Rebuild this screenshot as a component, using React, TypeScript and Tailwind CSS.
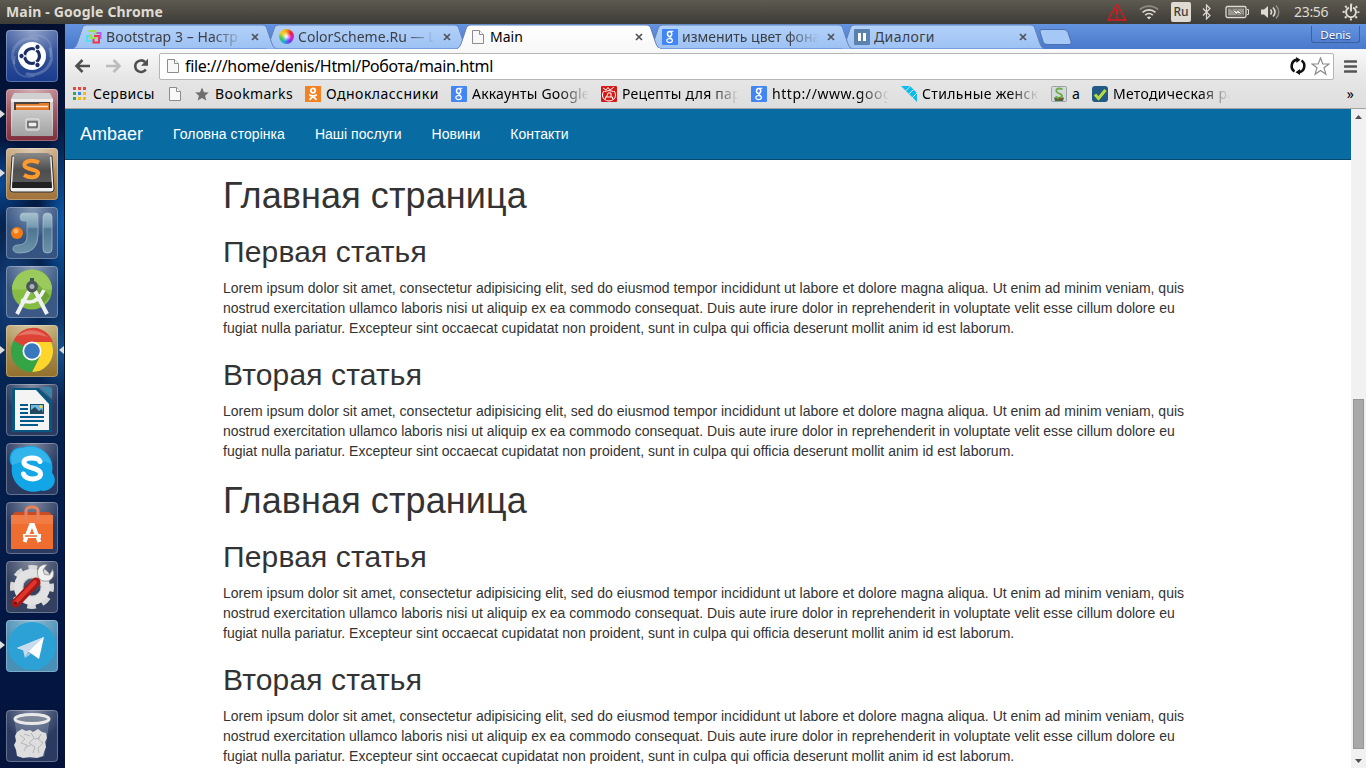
import React from "react";

const LOREM =
  "Lorem ipsum dolor sit amet, consectetur adipisicing elit, sed do eiusmod tempor incididunt ut labore et dolore magna aliqua. Ut enim ad minim veniam, quis nostrud exercitation ullamco laboris nisi ut aliquip ex ea commodo consequat. Duis aute irure dolor in reprehenderit in voluptate velit esse cillum dolore eu fugiat nulla pariatur. Excepteur sint occaecat cupidatat non proident, sunt in culpa qui officia deserunt mollit anim id est laborum.";

const FADE = "[mask-image:linear-gradient(to_right,#000_calc(100%-30px),transparent)]";

/* ---------- small icons ---------- */

function PageIcon() {
  return (
    <svg width="16" height="16" viewBox="0 0 16 16" className="shrink-0">
      <path d="M2.500 1.500h7l4 4v9h-11z" fill="#f8f8f8" stroke="#8c8c8c" />
      <path d="M9.500 1.500v4h4" fill="#fff" stroke="#8c8c8c" />
    </svg>
  );
}

function GoogleIcon() {
  return (
    <svg width="16" height="16" viewBox="0 0 16 16" className="shrink-0">
      <rect width="16" height="16" rx="1" fill="#4285f4" />
      <g fill="none" stroke="#fff">
        <ellipse cx="7.600" cy="5" rx="2.100" ry="2.400" strokeWidth="1.500" />
        <path d="M8.200 2.200h3.300M8.600 7.300c-2 1 .2 1.600 1.400 2.500" strokeWidth="1.100" />
        <ellipse cx="7.600" cy="11.600" rx="2.800" ry="2" strokeWidth="1.200" />
      </g>
    </svg>
  );
}

function BootstrapIcon() {
  return (
    <svg width="16" height="16" viewBox="0 0 16 16" fill="none" strokeWidth="2" className="shrink-0">
      <path d="M5 7H1v5h5" stroke="#4fe0ee" />
      <path d="M9 4h5.500v5H12" stroke="#b55be8" />
      <path d="M2.500 2h7v7h-5V5" stroke="#9be24a" />
      <path d="M8 7h5v6.500H7.500V10" stroke="#f2354b" />
    </svg>
  );
}

function ColorWheel() {
  return (
    <div className="flex size-4 shrink-0 items-center justify-center">
      <div className="size-[15px] rounded-full bg-[radial-gradient(circle,#fff_0%,transparent_45%),conic-gradient(#f4a11c,#ee1c38,#d81fd4,#6a3ef0,#17b4d8,#53c644,#f4d11c,#f4a11c)]" />
    </div>
  );
}

function PauseIcon() {
  return (
    <svg width="16" height="16" viewBox="0 0 16 16" className="shrink-0">
      <rect width="16" height="16" rx="1" fill="#5b82ad" />
      <path d="M4 4h3v8H4zM9 4h3v8H9z" fill="#fff" />
    </svg>
  );
}

function AppsIcon() {
  const colors = ["#e8453c", "#e8453c", "#e8453c", "#2da94f", "#3d82f0", "#f6b912", "#2da94f", "#f6b912", "#f6b912"];
  return (
    <svg width="14" height="14" viewBox="0 0 14 14" className="shrink-0">
      {colors.map((c, i) => (
        <rect key={i} x={(i % 3) * 5} y={Math.floor(i / 3) * 5} width="3" height="3" fill={c} />
      ))}
    </svg>
  );
}

function OkIcon() {
  return (
    <svg width="16" height="16" viewBox="0 0 16 16" className="shrink-0">
      <rect width="16" height="16" fill="#f58220" />
      <g fill="none" stroke="#fff" strokeWidth="1.800" strokeLinecap="round">
        <circle cx="8" cy="4.600" r="2.200" />
        <path d="M4.800 8.900c2 1.400 4.400 1.400 6.400 0M8 10.200L5 13.400M8 10.200l3 3.200" />
      </g>
    </svg>
  );
}

function RecipeIcon() {
  return (
    <svg width="16" height="16" viewBox="0 0 16 16" className="shrink-0">
      <rect width="16" height="16" rx="1" fill="#d31a17" />
      <g fill="none" stroke="#fff" strokeWidth="1">
        <path d="M3 5a6 6 0 0 0 0 8q5 4 10 0a6 6 0 0 0 0-8M3.500 5.500q4.500-2 9 0" />
        <path d="M4.500 13v-2h7v2M5.500 11l1.500-4h3v4M2 2l3 2 2-2.500 2 2.500 4-3" />
      </g>
    </svg>
  );
}

function WingIcon() {
  return (
    <svg width="16" height="16" viewBox="0 0 16 16" className="shrink-0">
      <path d="M0 0h9l7 7v9z" fill="#0bbcec" />
      <path d="M9.500 0L4.500 5M12.500 3.500L8 8M16 7l-5 5" stroke="#e2e2e2" strokeWidth="1" />
    </svg>
  );
}

function SIcon() {
  return (
    <svg width="16" height="16" viewBox="0 0 16 16" className="shrink-0">
      <rect x=".5" y=".5" width="15" height="15" rx="1" fill="#d3d9dd" stroke="#9ba3a8" />
      <path d="M3 11.500h10l-1 3.500H4z" fill="#4a6b3c" />
      <path d="M11.500 3.500C8 1.500 4.500 3 5.500 5.500S11.500 7.500 11 10 6.500 12.500 4.500 10.500" fill="none" stroke="#6fae4c" strokeWidth="2" />
      <path d="M8 12l3 1.500" stroke="#b23a2c" strokeWidth="1.500" />
    </svg>
  );
}

function CheckIcon() {
  return (
    <svg width="16" height="16" viewBox="0 0 16 16" className="shrink-0">
      <rect width="16" height="16" rx="3" fill="#225a85" />
      <path d="M3 8.500l3.500 4L13.500 4" fill="none" stroke="#b6dc3c" strokeWidth="3" />
    </svg>
  );
}

/* ---------- system panel ---------- */

function TopPanel() {
  return (
    <div className="flex h-6 shrink-0 items-center bg-gradient-to-b from-[#5d5a50] to-[#3d3c37] pl-1.5 text-[#dfdbd2]">
      <span className="text-[14px] leading-6 font-bold tracking-[0.150px] whitespace-nowrap">Main - Google Chrome</span>
      <svg className="ml-auto" width="20" height="18" viewBox="0 0 20 18" fill="none" stroke="#e8141b">
        <path d="M10 1.500L19 17H1z" strokeWidth="1.300" />
        <path d="M10 6v6M10 13.500v2" strokeWidth="2" />
      </svg>
      <svg className="ml-3" width="20" height="16" viewBox="0 0 20 16" fill="none" stroke="#dfdbd2" strokeWidth="1.700">
        <path d="M1 5.500c5-4.600 13-4.600 18 0" stroke="#8f8c84" />
        <path d="M3.600 8.300c3.600-3.300 9.200-3.300 12.800 0M6.200 11.100c2.200-2 5.400-2 7.600 0" />
        <path d="M7.800 13.200L10 15.500l2.200-2.300c-1.300-1-3.100-1-4.400 0z" fill="#dfdbd2" stroke="none" />
      </svg>
      <span className="ml-3 flex h-5 w-5 items-center justify-center rounded-[2px] bg-[#dfdbd2] text-[12px] font-medium text-[#3d3c37]">Ru</span>
      <svg className="ml-[10px]" width="12" height="16" viewBox="0 0 12 16" fill="none" stroke="#dfdbd2" strokeWidth="1.200">
        <path d="M2 4.500l7 7-3.500 3.500V1L9 4.500l-7 7" />
      </svg>
      <svg className="ml-[12px]" width="25" height="14" viewBox="0 0 25 14">
        <rect x="1" y="1.500" width="20" height="11" rx="1.500" fill="none" stroke="#dfdbd2" strokeWidth="1.300" />
        <path d="M22 4.500h1.500v5H22" fill="none" stroke="#dfdbd2" />
        <rect x="3" y="3.500" width="16" height="7" fill="#9a978f" />
        <path d="M6 4l6 2.500.5-2L18 10l-5.500-2-.5 2z" fill="#f3f0e8" stroke="#4a4842" strokeWidth=".6" />
      </svg>
      <svg className="ml-[10px]" width="22" height="16" viewBox="0 0 22 16" fill="none" stroke="#dfdbd2" strokeWidth="1.600">
        <path d="M1 5.500h3l4-3.500v12l-4-3.500H1z" fill="#dfdbd2" stroke="none" />
        <path d="M10.500 5.500c1.300 1.500 1.300 3.500 0 5M13 3.500c2.500 2.800 2.500 6.200 0 9" />
        <path d="M16 1.500c3.600 4 3.600 9 0 13" stroke="#8f8c84" />
      </svg>
      <span className="ml-[12px] w-9 text-[14px] leading-6 tracking-[-0.300px] whitespace-nowrap">23:56</span>
      <svg className="mr-[6px] ml-[12px]" width="18" height="18" viewBox="0 0 18 18" fill="none" stroke="#dfdbd2">
        <circle cx="9" cy="9" r="7.300" strokeWidth="2.200" strokeDasharray="2 3.733" strokeDashoffset="1" />
        <path d="M7 4.600a5 5 0 1 0 4 0" strokeWidth="2" />
        <path d="M9 1.500v7" strokeWidth="2" />
      </svg>
    </div>
  );
}

/* ---------- launcher ---------- */

function Tile({ bg, running, focused, children }: { bg: string; running?: boolean; focused?: boolean; children: React.ReactNode }) {
  return (
    <div className="relative flex h-[52px] w-[65px] shrink-0 pl-1.5">
      {running && <div className="absolute top-[21px] left-0 border-y-[4.500px] border-l-[5px] border-y-transparent border-l-[#dddddd]" />}
      {focused && <div className="absolute top-[21px] right-px border-y-[4.500px] border-r-[5px] border-y-transparent border-r-[#dddddd]" />}
      <div className={"size-[52px] overflow-hidden rounded-[4px] " + bg}>
        <svg width="52" height="52" viewBox="0 0 52 52" className="block">
          <defs>
            <radialGradient id="gloss" cx=".5" cy="0" r=".6">
              <stop offset="0" stopColor="#fff" stopOpacity=".4" />
              <stop offset="1" stopColor="#fff" stopOpacity="0" />
            </radialGradient>
            <linearGradient id="steel" x1="0" y1="0" x2="0" y2="1">
              <stop offset="0" stopColor="#a9c2d0" />
              <stop offset=".35" stopColor="#7499ae" />
              <stop offset=".4" stopColor="#4f7691" />
              <stop offset="1" stopColor="#6d93a9" />
            </linearGradient>
            <linearGradient id="cabinet" x1="0" y1="0" x2="0" y2="1">
              <stop offset="0" stopColor="#cacaca" />
              <stop offset="1" stopColor="#a2a2a2" />
            </linearGradient>
            <linearGradient id="keycap" x1="0" y1="0" x2="0" y2="1">
              <stop offset="0" stopColor="#8a8a8a" />
              <stop offset=".5" stopColor="#4e4e4e" />
              <stop offset="1" stopColor="#5c5c5c" />
            </linearGradient>
          </defs>
          <rect width="52" height="52" fill="url(#gloss)" />
          {children}
          <rect x=".5" y=".5" width="51" height="51" rx="3.500" fill="none" stroke="#fff" strokeOpacity=".28" />
        </svg>
      </div>
    </div>
  );
}

const DARK = "bg-[#2a3a60]";

function Launcher() {
  return (
    <div className="flex w-[65px] shrink-0 flex-col gap-[7px] border-r border-[#07122c] bg-[radial-gradient(ellipse_35px_45px_at_0px_160px,#0b4a94,transparent),radial-gradient(ellipse_26px_100px_at_64px_200px,#0b5cae,transparent),radial-gradient(ellipse_35px_80px_at_12px_270px,#16427f,transparent),radial-gradient(ellipse_30px_50px_at_64px_325px,#165290,transparent),linear-gradient(#020f31,#052654_45%,#041f4c_60%,#031745_80%,#03133b)] pt-1.5 pb-1.5">
      <Tile bg="bg-gradient-to-b from-[#4b66a5] to-[#193b8d]">
        <g fill="none" stroke="#a8badb" strokeLinecap="round">
          <path d="M8 33C2 18 16 5 31 9" strokeWidth="3" opacity=".3" />
          <path d="M44 19c6 15-7 28-23 25" strokeWidth="3" opacity=".35" />
          <path d="M24 6c17-3 24 8 20 20M28 46C13 50 5 38 9 27" strokeWidth="2" opacity=".25" />
        </g>
        <circle cx="26" cy="26" r="14" fill="#fff" />
        <circle cx="26" cy="26" r="7.500" fill="none" stroke="#1b2d63" strokeWidth="3.200" />
        <path d="M20 26h-6M29 20.800l3-5.200M29 31.200l3 5.200" stroke="#fff" strokeWidth="1.500" />
        <g fill="#1b2d63" stroke="#fff" strokeWidth="1">
          <circle cx="15.500" cy="26" r="2.700" /><circle cx="31.500" cy="17" r="2.700" /><circle cx="31.500" cy="35" r="2.700" />
        </g>
      </Tile>
      <Tile bg="bg-gradient-to-b from-[#b67983] to-[#7f2f3e]" running>
        <path d="M8 4h36l3 6v37H5V10z" fill="#d0d0d0" />
        <path d="M5 10h42v3H5z" fill="#ededed" />
        <path d="M8 13h36v9H8z" fill="#4a423d" />
        <path d="M10 15h22l2-1h9v8H10z" fill="#e57b2c" />
        <path d="M10 17.500h32" stroke="#fbe6cf" strokeWidth="1.500" />
        <path d="M7 21h38l2 26H5z" fill="url(#cabinet)" />
        <rect x="20" y="30" width="13" height="11" rx="2" fill="#b3b3b3" stroke="#dcdcdc" strokeWidth="1.500" />
        <rect x="22" y="33" width="9" height="5" fill="#eee" stroke="#333" />
      </Tile>
      <Tile bg="bg-gradient-to-b from-[#c9a980] to-[#a1723a]" running>
        <path d="M6 8h40l2 33q0 3-3 3H7q-3 0-3-3z" fill="#eee" stroke="#303030" />
        <path d="M11 5h30q3 0 3 3l2 31H6L8 8q0-3 3-3z" fill="url(#keycap)" />
        <path d="M6.500 34h39l.5 6H6z" fill="#222" />
        <path d="M33 14.500C26 11 18 13 18.500 17.500s14.500 3.500 13.500 8-8 5-14 1.500" fill="none" stroke="#ff9a2e" strokeWidth="4" />
      </Tile>
      <Tile bg="bg-[#355482]">
        <path d="M17 6h13q2 0 2 2v20q0 18-18 18-7 0-7-4t5-4q9 0 9-9V14h-4q-3 0-3-4t3-4z" fill="url(#steel)" stroke="#9fb9cb" strokeWidth=".7" />
        <rect x="37" y="6" width="9" height="40" rx="4" fill="url(#steel)" stroke="#a9c4d5" strokeWidth=".7" />
        <circle cx="11" cy="26" r="6" fill="#f47a13" />
        <circle cx="10" cy="24" r="2.500" fill="#ffb765" />
      </Tile>
      <Tile bg="bg-[#3b5984]">
        <circle cx="26" cy="23.500" r="20" fill="#86bc42" />
        <path d="M6 23.500a20 20 0 0 1 40 0z" fill="#9aca5b" />
        <path d="M29 15l15 15-9 10-10-15z" fill="#52852d" opacity=".5" />
        <path d="M15 34q15 7 23-10" fill="none" stroke="#f2f2f2" strokeWidth="3.500" />
        <path d="M23 25L11 48M29 25l12 23" stroke="#eef0f1" strokeWidth="4" />
        <path d="M24 12h4v5h-4z" fill="#435057" />
        <circle cx="26" cy="20.500" r="4.200" fill="#a6b2b5" stroke="#4a555b" strokeWidth="3.400" />
      </Tile>
      <Tile bg="bg-gradient-to-b from-[#bba46b] to-[#91702b]" running focused>
        <circle cx="26" cy="26" r="21" fill="#33a44a" />
        <path d="M26 26L7.800 15.500A21 21 0 0 1 47 17H26z" fill="#dd4435" />
        <path d="M26 17h19A21 21 0 0 1 26 47l8-16z" fill="#ffd42b" />
        <path d="M8 15.500A21 21 0 0 0 26 47l8-16-8 4-9-5z" fill="#35a447" />
        <path d="M11 11q15-12 31 1-15-5-31-1z" fill="#fff" opacity=".25" />
        <circle cx="26" cy="26" r="9.500" fill="#fff" />
        <circle cx="26" cy="26" r="7.800" fill="#3978bd" />
      </Tile>
      <Tile bg={DARK}>
        <path d="M8 4h25l13 13v31H6V4z" fill="#075780" />
        <path d="M34 3h9q3 0 3 3v9z" fill="#3985aa" />
        <path d="M9 6h21l13 14v26H9z" fill="#f4f4f4" />
        <path d="M14 21h8M14 25h8M14 29h8M14 33h24M14 37h24M14 41h18" stroke="#05598b" strokeWidth="2" />
        <rect x="24.500" y="20.500" width="13" height="9" fill="#71b8df" stroke="#174f71" />
        <path d="M25 29v-3l4-3 4 4 3-2 1 4z" fill="#29475a" /><circle cx="35" cy="22.500" r="1.600" fill="#f2d141" />
      </Tile>
      <Tile bg={DARK}>
        <path d="M4 13A11 11 0 0 1 17 4.500a22 22 0 0 1 29 25A11 11 0 0 1 35 47.500 22 22 0 0 1 6 23a12 12 0 0 1-2-10z" fill="#12a6e6" />
        <path d="M5 14A11 11 0 0 1 17 5a21 21 0 0 1 28 16q-15-8-39 1z" fill="#4fc3ef" opacity=".5" />
        <path d="M34 18.500c-2-4.500-16-5-16 1s16.500 5 16.500 11.500-15 6.500-17 0" fill="none" stroke="#fff" strokeWidth="5" strokeLinecap="round" />
      </Tile>
      <Tile bg={DARK}>
        <path d="M5 14l4-4h34l4 4z" fill="#c64d27" />
        <path d="M5 13h42v34H5z" fill="#ef6d2e" />
        <path d="M5 13h42v9H5z" fill="#f48a56" opacity=".5" />
        <path d="M20 18V9q0-4 6-4t6 4v9" fill="none" stroke="#e4835e" strokeWidth="3" />
        <path d="M18.500 40l6.500-17h2L33.500 40" fill="none" stroke="#fff" strokeWidth="4" />
        <path d="M17 34h18" stroke="#fff" strokeWidth="4" /><path d="M19 34h12" stroke="#e36827" strokeWidth="1.300" />
      </Tile>
      <Tile bg="bg-[#33405f]">
        <circle cx="26" cy="26" r="19" fill="none" stroke="#d9d9d9" strokeWidth="6" strokeDasharray="8.500 6.420" strokeDashoffset="4" />
        <circle cx="26" cy="26" r="13.500" fill="none" stroke="#e2e2e2" strokeWidth="9" />
        <circle cx="26" cy="26" r="9" fill="none" stroke="#bcbcbc" />
        <path d="M31 20l6-6" stroke="#dedede" strokeWidth="5" />
        <path d="M41 3.500q-8-.5-9.500 6.500-.5 4 1 6.500l3 3q8 2.500 11.500-3.500 1.500-4-.5-7.500l-3 5.500-5-.5-1.500-4.500z" fill="#f1f1f1" stroke="#8f8f8f" strokeWidth=".8" />
        <path d="M10 42L30 21" stroke="#a71916" strokeWidth="9" strokeLinecap="round" />
        <path d="M10 41L29 21" stroke="#df332c" strokeWidth="4" strokeLinecap="round" />
        <circle cx="9.500" cy="42" r="1.500" fill="#6d1010" />
      </Tile>
      <Tile bg="bg-[#4a8fb5]" running>
        <circle cx="26" cy="26" r="24" fill="#2ba1d5" />
        <path d="M11 28l27-11-5 22-10-7z" fill="#fff" />
        <path d="M11 28l27-11-16 15-3 6-2-8z" fill="#c9dcee" />
        <path d="M22 32l-3 6 6-4z" fill="#a9c4dc" />
      </Tile>
      <div className="mt-auto">
        <Tile bg={DARK}>
          <path d="M9 10l5 36q12 4 24 0l5-36z" fill="#a3b2c4" opacity=".3" stroke="#c5cfdb" strokeWidth=".8" />
          <path d="M11 22l5-3 4 2 4-1 3 2 5-3 4 3 4 1 1 5-2 4 1 5-2 5-1 4-6 2-7-1-7 1-6-2-1-6-2-5 2-4-1-5z" fill="#dedede" />
          <path d="M14 25l5 4-4 4 6 2-3 6M25 23l3 5-5 5 6 4-2 6M35 24l-3 5 5 4-5 5 1 5M18 24l6 2M28 29l6-1M20 37l5-2" fill="none" stroke="#b4b6b9" strokeWidth="1" />
          <ellipse cx="26" cy="9" rx="17" ry="4.500" fill="#7c8798" stroke="#e9e9e9" strokeWidth="3" />
        </Tile>
      </div>
    </div>
  );
}

/* ---------- browser chrome ---------- */

function Tab({ icon, title, active, order, text }: { icon: React.ReactNode; title: string; active?: boolean; order: string; text: string }) {
  return (
    <div className={"relative -mr-3 flex h-[25px] w-[204px] shrink-0 items-center pl-[13px] " + order}>
      <svg className="absolute inset-0" width="204" height="25" viewBox="0 0 204 25">
        <defs>
          <linearGradient id="tabIdle" x1="0" y1="0" x2="0" y2="1">
            <stop offset="0" stopColor="#b3d1fa" /><stop offset="1" stopColor="#9dc2f3" />
          </linearGradient>
          <linearGradient id="tabActive" x1="0" y1="0" x2="0" y2="1">
            <stop offset="0" stopColor="#fff" /><stop offset="1" stopColor="#f8f8f8" />
          </linearGradient>
        </defs>
        <path d="M0 24.500C3 23.500 3.500 21 5 17L9 5c1-3 2-4 5-4h175c3 0 4 1 5 4l4 12c1.500 4 2 6.500 5 7.500" fill={active ? "url(#tabActive)" : "url(#tabIdle)"} stroke="#6482b4" strokeWidth="1" />
        {active && <path d="M1 24.500h202" stroke="#f8f8f8" />}
      </svg>
      <div className="relative flex items-center gap-1">
        {icon}
        <span className={"h-5 w-[137px] overflow-hidden text-[14px] leading-5 whitespace-nowrap " + text}>{title}</span>
      </div>
      <svg className="relative ml-2" width="8" height="8" viewBox="0 0 8 8">
        <path d="M1 1l6 6M7 1L1 7" stroke="#505357" strokeWidth="1.700" />
      </svg>
    </div>
  );
}

function TabStrip() {
  return (
    <div className="flex h-[25px] shrink-0 bg-gradient-to-b from-[#6494e0] to-[#4a78cc] pl-2">
      <Tab icon={<BootstrapIcon />} title="Bootstrap 3 – Настр" order="z-[4]" text={"text-[#3c3f44] tracking-[0.050px] " + FADE} />
      <Tab icon={<ColorWheel />} title="ColorScheme.Ru — L" order="z-[3]" text={"text-[#3c3f44] tracking-[0.050px] " + FADE} />
      <Tab icon={<PageIcon />} title="Main" active order="z-[5]" text="text-black" />
      <Tab icon={<GoogleIcon />} title="изменить цвет фона" order="z-[2]" text={"text-[#3c3f44] " + FADE} />
      <Tab icon={<PauseIcon />} title="Диалоги" order="z-[1]" text="text-[#3c3f44] tracking-[0.400px]" />
      <svg className="mt-[5px] ml-[6px]" width="34" height="17" viewBox="0 0 34 17">
        <path d="M3 .5h22q3 0 4 3l3 9q1 3-2 3H8q-3 0-4-3L1 3q-1-2.500 2-2.500z" fill="#a5c8f6" stroke="#4a70ad" />
      </svg>
      <span className="mt-[2px] mr-[6px] ml-auto flex h-[17px] w-[49px] items-center justify-center rounded-b-[3px] border border-t-0 border-[#3c5fa0] pt-px text-[11.500px] text-white [text-shadow:0_1px_1px_#1d3a75]">Denis</span>
    </div>
  );
}

function AddressBar() {
  return (
    <div className="flex h-[31px] shrink-0 items-center pt-[3px] pl-[9px]">
      <svg width="18" height="16" viewBox="0 0 18 16" fill="none" stroke="#505050" strokeWidth="2.600">
        <path d="M2.500 8H16M8.500 2L2.500 8l6 6" />
      </svg>
      <svg className="ml-3" width="18" height="16" viewBox="0 0 18 16" fill="none" stroke="#bcbcbc" strokeWidth="2.600">
        <path d="M2 8h13.500M9.500 2l6 6-6 6" />
      </svg>
      <svg className="ml-[10px]" width="18" height="17" viewBox="0 0 18 17">
        <path d="M13.800 11.500A5.800 5.800 0 1 1 13 4" fill="none" stroke="#505050" strokeWidth="2.600" />
        <path d="M16 .8v7H9z" fill="#505050" />
      </svg>
      <div className="ml-[9px] flex h-[27px] w-[1175px] items-center rounded-[2px] border border-[#b5b5b5] bg-white pr-[3px] pl-[5px]">
        <PageIcon />
        <span className="ml-1 text-[16px] leading-6 tracking-[-0.320px] whitespace-nowrap text-black">file:///home/denis/Html/Робота/main.html</span>
        <svg className="ml-auto" width="18" height="18" viewBox="0 0 18 18" fill="none" stroke="#111" strokeWidth="2.600">
          <path d="M5.500 14.500A6.600 6.600 0 0 1 8 2.600M12.500 3.500a6.600 6.600 0 0 1-2.500 11.900" />
          <path d="M7 0l4.500 2.800L7.500 6zM11 12l-4.500 3.200L11 18z" fill="#111" stroke="none" />
        </svg>
        <svg className="ml-1" width="19" height="19" viewBox="0 0 19 19">
          <path d="M9.500 1l2.300 6h6.200l-5 3.800 1.900 6.400-5.400-3.800-5.400 3.800L6 10.800 1 7h6.200z" fill="#fff" stroke="#8a8a8a" strokeWidth="1.200" />
        </svg>
      </div>
      <svg className="ml-[10px]" width="13" height="13" viewBox="0 0 13 13">
        <path d="M1 1.500h11M1 6.500h11M1 11.500h11" stroke="#555" strokeWidth="2.600" strokeLinecap="round" />
      </svg>
    </div>
  );
}

function Bookmark({ icon, label, box, text = "" }: { icon: React.ReactNode; label?: string; box: string; text?: string }) {
  return (
    <div className={"flex shrink-0 items-center overflow-hidden " + box}>
      {icon}
      {label && <span className={"ml-[5px] min-w-0 flex-1 overflow-hidden whitespace-nowrap " + text}>{label}</span>}
    </div>
  );
}

function BookmarksBar() {
  return (
    <div className="flex h-7 shrink-0 items-center pl-2 text-[14px] leading-6 text-black">
      <Bookmark icon={<AppsIcon />} label="Сервисы" box="w-[94px]" text="pl-px tracking-[0.350px]" />
      <Bookmark icon={<PageIcon />} box="w-[27px]" />
      <Bookmark
        icon={<svg width="16" height="16" viewBox="0 0 16 16"><path d="M8 1.500l2 4.700 4.800.3-3.700 3.200 1.200 4.800L8 11.900l-4.300 2.600 1.200-4.800L1.200 6.500 6 6.200z" fill="#6e6e6e" /></svg>}
        label="Bookmarks"
        box="w-[111px]"
        text="tracking-[0.400px]"
      />
      <Bookmark icon={<OkIcon />} label="Одноклассники" box="w-[146px]" text="tracking-[0.500px]" />
      <Bookmark icon={<GoogleIcon />} label="Аккаунты Google" box="w-[138px] mr-[12px]" text={"tracking-[0.200px] " + FADE} />
      <Bookmark icon={<RecipeIcon />} label="Рецепты для пар" box="w-[138px] mr-[12px]" text={"tracking-[0.250px] " + FADE} />
      <Bookmark icon={<GoogleIcon />} label="http://www.goog" box="w-[138px] mr-[12px]" text={"tracking-[0.550px] " + FADE} />
      <Bookmark icon={<WingIcon />} label="Стильные женск" box="w-[138px] mr-[12px]" text={"tracking-[0.350px] " + FADE} />
      <Bookmark icon={<SIcon />} label="a" box="w-[41px]" />
      <Bookmark icon={<CheckIcon />} label="Методическая ра" box="w-[138px]" text={"tracking-[0.300px] " + FADE} />
      <span className="mr-3 ml-auto text-[14px] leading-5">»</span>
    </div>
  );
}

/* ---------- web page ---------- */

function Article({ title }: { title: string }) {
  return (
    <section>
      <h2 className="mt-5 mb-[10px] text-[30px] leading-[33px] tracking-[0.150px]">{title}</h2>
      <p className="mb-[10px] text-[14px] leading-5">{LOREM}</p>
    </section>
  );
}

function WebPage() {
  return (
    <main className="min-w-0 flex-1 overflow-hidden bg-white font-['Liberation_Sans',Arial,sans-serif] text-[#333]">
      <nav className="flex h-[51px] items-center border-b border-[#05486e] bg-[#086ca2] pl-[15px] text-[14px] leading-5 text-white">
        <a className="mr-[15px] text-[18px]">Ambaer</a>
        <a className="px-[15px] tracking-[0.060px]">Головна сторінка</a>
        <a className="px-[15px]">Наші послуги</a>
        <a className="px-[15px]">Новини</a>
        <a className="px-[15px]">Контакти</a>
      </nav>
      <div className="ml-[158px] w-[970px] pt-4">
        {[0, 1].map((i) => (
          <div key={i} className={i ? "mt-5" : ""}>
            <h1 className="text-[36px] leading-[39px] tracking-[0.100px]">Главная страница</h1>
            <Article title="Первая статья" />
            <Article title="Вторая статья" />
          </div>
        ))}
      </div>
    </main>
  );
}

function Scrollbar() {
  return (
    <div className="flex w-[15px] shrink-0 flex-col items-center bg-[#f1f1f1]">
      <svg className="mt-[6px]" width="7" height="4" viewBox="0 0 7 4"><path d="M0 4l3.500-4L7 4z" fill="#505050" /></svg>
      <div className="mt-[280px] h-[350px] w-[11px] border border-[#969696] bg-[#a8a8a8]" />
      <svg className="mt-[10px]" width="7" height="4" viewBox="0 0 7 4"><path d="M0 0h7L3.500 4z" fill="#505050" /></svg>
    </div>
  );
}

export default function App() {
  return (
    <div className="flex h-[768px] w-[1366px] flex-col overflow-hidden font-['Noto_Sans',sans-serif]">
      <TopPanel />
      <div className="flex min-h-0 flex-1">
        <Launcher />
        <div className="flex min-w-0 flex-1 flex-col">
          <TabStrip />
          <div className="flex h-[60px] shrink-0 flex-col border-b border-[#a3a3a3] bg-gradient-to-b from-[#f9f9f9] via-[#e6e6e6] to-[#dedede]">
            <AddressBar />
            <BookmarksBar />
          </div>
          <div className="flex min-h-0 flex-1">
            <WebPage />
            <Scrollbar />
          </div>
        </div>
      </div>
    </div>
  );
}
